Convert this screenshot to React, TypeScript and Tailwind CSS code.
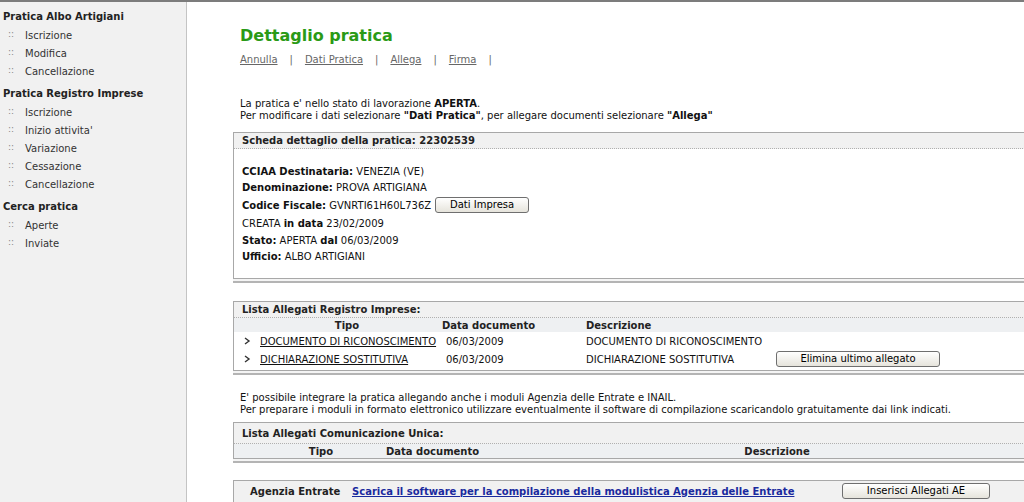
import React from 'react';

const font = { fontFamily: '"DejaVu Sans", Verdana, sans-serif' };

const Arrow: React.FC = () => (
  <svg width="7" height="8" viewBox="0 0 7 8" className="shrink-0">
    <path d="M1 1 L5 4 L1 7" fill="none" stroke="#333" strokeWidth="1.4" />
  </svg>
);

const XpButton: React.FC<{ label: string; className?: string }> = ({ label, className = '' }) => (
  <button
    className={`h-[16px] rounded-[3px] border border-[#6f6f6f] bg-gradient-to-b from-[#ffffff] to-[#e6e4dc] text-[10px] leading-[14px] text-black ${className}`}
  >
    {label}
  </button>
);

const menu = [
  { title: 'Pratica Albo Artigiani', items: ['Iscrizione', 'Modifica', 'Cancellazione'] },
  {
    title: 'Pratica Registro Imprese',
    items: ['Iscrizione', "Inizio attivita'", 'Variazione', 'Cessazione', 'Cancellazione'],
  },
  { title: 'Cerca pratica', items: ['Aperte', 'Inviate'] },
];

const Sidebar: React.FC = () => (
  <aside className="w-[187px] shrink-0 bg-[#f1f1f1] border-r border-[#c4c4c4] pt-[6px] min-h-[500px]">
    {menu.map((section, i) => (
      <div key={section.title} className={i > 0 ? 'mt-[5px]' : ''}>
        <div className="pl-[3px] h-[18px] leading-[18px] text-[10px] font-bold text-[#222]">{section.title}</div>
        {section.items.map((item) => (
          <div key={item} className="flex h-[18px] items-center text-[10px] text-[#333]">
            <span className="w-[16px] pl-[8px] text-[9px] text-[#888]">::</span>
            <span className="pl-[9px]">{item}</span>
          </div>
        ))}
      </div>
    ))}
  </aside>
);

const Box: React.FC<{ children: React.ReactNode; className?: string }> = ({ children, className = '' }) => (
  <div className={className}>
    <div className="w-[840px] border border-[#a8a8a8] border-r-0">{children}</div>
    <div className="w-[840px] h-[4px] border-b-2 border-[#b4b4b4] bg-[#f4f4f4]" />
  </div>
);

const BoxHeader: React.FC<{ children: React.ReactNode; h?: string }> = ({ children, h = 'h-[16px]' }) => (
  <div className={`${h} flex items-center bg-[#f1f1f1] border-b border-dotted border-[#b0b0b0] pl-[8px] font-bold text-[#222]`}>
    {children}
  </div>
);

const Label: React.FC<{ children: React.ReactNode }> = ({ children }) => <b className="font-bold">{children}</b>;

const App: React.FC = () => {
  return (
    <div style={font} className="w-[1024px] h-[502px] overflow-hidden bg-white text-[10px] text-[#111]">
      <div className="h-[2px] bg-[#7c7c7c]" />
      <div className="flex">
        <Sidebar />
        <main className="flex-1 pl-[47px] overflow-hidden whitespace-nowrap">
          <h1 className="mt-[24px] pl-[6px] h-[20px] leading-[20px] text-[16px] font-bold text-[#2a9a16]">Dettaglio pratica</h1>
          <nav className="mt-[6px] pl-[6px] h-[14px] flex items-center gap-[12px] text-[10px] text-[#666]">
            <a className="underline">Annulla</a>
            <span>|</span>
            <a className="underline">Dati Pratica</a>
            <span>|</span>
            <a className="underline">Allega</a>
            <span>|</span>
            <a className="underline">Firma</a>
            <span>|</span>
          </nav>

          <div className="mt-[32px] pl-[6px] leading-[12px]">
            <div>
              La pratica e' nello stato di lavorazione <Label>APERTA</Label>.
            </div>
            <div>
              Per modificare i dati selezionare <Label>"Dati Pratica"</Label>, per allegare documenti selezionare{' '}
              <Label>"Allega"</Label>
            </div>
          </div>

          <Box className="mt-[10px] -ml-[1px]">
            <BoxHeader>Scheda dettaglio della pratica: 22302539</BoxHeader>
            <div className="pl-[8px] pt-[14px] pb-[14px]">
              <div className="h-[16px] flex items-center">
                <Label>CCIAA Destinataria:</Label>&nbsp;VENEZIA (VE)
              </div>
              <div className="h-[17px] flex items-center">
                <Label>Denominazione:</Label>&nbsp;PROVA ARTIGIANA
              </div>
              <div className="h-[18px] flex items-center">
                <Label>Codice Fiscale:</Label>&nbsp;GVNRTI61H60L736Z
                <XpButton label="Dati Impresa" className="ml-[4px] w-[94px]" />
              </div>
              <div className="h-[18px] flex items-center">
                CREATA&nbsp;<Label>in data</Label>&nbsp;23/02/2009
              </div>
              <div className="h-[16px] flex items-center">
                <Label>Stato:</Label>&nbsp;APERTA&nbsp;<Label>dal</Label>&nbsp;06/03/2009
              </div>
              <div className="h-[16px] flex items-center">
                <Label>Ufficio:</Label>&nbsp;ALBO ARTIGIANI
              </div>
            </div>
          </Box>

          <Box className="mt-[18px] -ml-[1px]">
            <BoxHeader>Lista Allegati Registro Imprese:</BoxHeader>
            <div className="h-[14px] flex items-center bg-[#eef0f2] font-bold text-[#222]">
              <span className="w-[208px] pl-[18px] text-center">Tipo</span>
              <span className="w-[144px]">Data documento</span>
              <span>Descrizione</span>
            </div>
            <div className="h-[18px] flex items-center">
              <span className="w-[26px] pl-[10px] flex"><Arrow /></span>
              <span className="w-[182px]"><a className="underline text-[#111]">DOCUMENTO DI RICONOSCIMENTO</a></span>
              <span className="w-[144px] pl-[4px]">06/03/2009</span>
              <span className="w-[190px]">DOCUMENTO DI RICONOSCIMENTO</span>
            </div>
            <div className="h-[20px] flex items-center pb-[2px]">
              <span className="w-[26px] pl-[10px] flex"><Arrow /></span>
              <span className="w-[182px]"><a className="underline text-[#111]">DICHIARAZIONE SOSTITUTIVA</a></span>
              <span className="w-[144px] pl-[4px]">06/03/2009</span>
              <span className="w-[190px]">DICHIARAZIONE SOSTITUTIVA</span>
              <XpButton label="Elimina ultimo allegato" className="w-[164px]" />
            </div>
          </Box>

          <div className="mt-[17px] pl-[6px] leading-[12px]">
            <div>E' possibile integrare la pratica allegando anche i moduli Agenzia delle Entrate e INAIL.</div>
            <div>
              Per preparare i moduli in formato elettronico utilizzare eventualmente il software di compilazione scaricandolo gratuitamente dai link indicati.
            </div>
          </div>

          <Box className="mt-[6px] -ml-[1px]">
            <BoxHeader h="h-[21px]">Lista Allegati Comunicazione Unica:</BoxHeader>
            <div className="h-[14px] flex items-center bg-[#eef0f2] font-bold text-[#222]">
              <span className="w-[152px] pl-[22px] text-center">Tipo</span>
              <span className="w-[300px]">Data documento</span>
              <span className="w-[182px] text-center">Descrizione</span>
            </div>
          </Box>

          <div className="mt-[17px] -ml-[1px] w-[840px] border border-[#a8a8a8] border-r-0 bg-[#f1f1f1] h-[30px]">
            <div className="h-[20px] flex items-center">
              <span className="w-[118px] pl-[16px] font-bold text-[#222]">Agenzia Entrate</span>
              <span className="w-[490px]">
                <a className="font-bold underline text-[#1a2a9e]">
                  Scarica il software per la compilazione della modulistica Agenzia delle Entrate
                </a>
              </span>
              <XpButton label="Inserisci Allegati AE" className="w-[148px]" />
            </div>
          </div>
        </main>
      </div>
    </div>
  );
};

export default App;
